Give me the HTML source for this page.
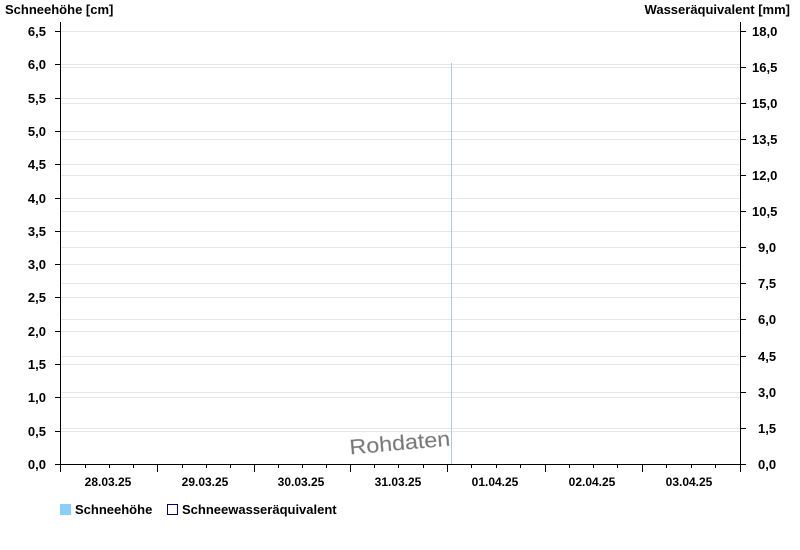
<!DOCTYPE html>
<html><head><meta charset="utf-8"><style>
html,body{margin:0;padding:0;background:#fff}
svg{display:block;font-family:"Liberation Sans",Arial,sans-serif;font-weight:bold}
</style></head><body>
<svg width="800" height="550" xmlns="http://www.w3.org/2000/svg">
<g stroke="#e6e6e6" stroke-width="1">
<line x1="61" x2="740" y1="31.5" y2="31.5"/><line x1="61" x2="740" y1="64.5" y2="64.5"/><line x1="61" x2="740" y1="98.5" y2="98.5"/><line x1="61" x2="740" y1="131.5" y2="131.5"/><line x1="61" x2="740" y1="164.5" y2="164.5"/><line x1="61" x2="740" y1="198.5" y2="198.5"/><line x1="61" x2="740" y1="231.5" y2="231.5"/><line x1="61" x2="740" y1="264.5" y2="264.5"/><line x1="61" x2="740" y1="297.5" y2="297.5"/><line x1="61" x2="740" y1="331.5" y2="331.5"/><line x1="61" x2="740" y1="364.5" y2="364.5"/><line x1="61" x2="740" y1="397.5" y2="397.5"/><line x1="61" x2="740" y1="431.5" y2="431.5"/>
<line x1="61" x2="740" y1="67.5" y2="67.5"/><line x1="61" x2="740" y1="103.5" y2="103.5"/><line x1="61" x2="740" y1="139.5" y2="139.5"/><line x1="61" x2="740" y1="175.5" y2="175.5"/><line x1="61" x2="740" y1="211.5" y2="211.5"/><line x1="61" x2="740" y1="247.5" y2="247.5"/><line x1="61" x2="740" y1="283.5" y2="283.5"/><line x1="61" x2="740" y1="319.5" y2="319.5"/><line x1="61" x2="740" y1="356.5" y2="356.5"/><line x1="61" x2="740" y1="392.5" y2="392.5"/><line x1="61" x2="740" y1="428.5" y2="428.5"/>
</g>
<line x1="451.5" x2="451.5" y1="63" y2="464" stroke="#9fcff0"/>
<text x="349" y="450" transform="rotate(-5 400 440)" font-size="21" font-weight="normal" fill="#777" stroke="#aaa" stroke-width="0.3" textLength="101" lengthAdjust="spacingAndGlyphs">Rohdaten</text>
<g stroke="#000" stroke-width="1">
<line x1="60.5" x2="60.5" y1="22" y2="464"/>
<line x1="740.5" x2="740.5" y1="22" y2="464"/>
<line x1="55" x2="741" y1="464.5" y2="464.5"/>
<path d="M55 31.5h6M55 64.5h6M55 98.5h6M55 131.5h6M55 164.5h6M55 198.5h6M55 231.5h6M55 264.5h6M55 297.5h6M55 331.5h6M55 364.5h6M55 397.5h6M55 431.5h6"/>
<path d="M740 31.5h6M740 67.5h6M740 103.5h6M740 139.5h6M740 175.5h6M740 211.5h6M740 247.5h6M740 283.5h6M740 319.5h6M740 356.5h6M740 392.5h6M740 428.5h6M740 464.5h6"/>
<path d="M60.5 464v8M157.5 464v8M254.5 464v8M350.5 464v8M447.5 464v8M545.5 464v8M642.5 464v8M740.5 464v8"/>
<path d="M85.5 464v4M109.5 464v4M133.5 464v4M182.5 464v4M206.5 464v4M230.5 464v4M278.5 464v4M302.5 464v4M326.5 464v4M374.5 464v4M398.5 464v4M423.5 464v4M471.5 464v4M496.5 464v4M520.5 464v4M569.5 464v4M593.5 464v4M617.5 464v4M666.5 464v4M691.5 464v4M715.5 464v4"/>
</g>
<g font-size="13" fill="#000">
<text x="5" y="14">Schneehöhe [cm]</text>
<text x="790" y="14" text-anchor="end">Wasseräquivalent [mm]</text>
</g>
<g font-size="13" fill="#000" text-anchor="end">
<text x="46" y="36">6,5</text><text x="46" y="69">6,0</text><text x="46" y="103">5,5</text><text x="46" y="136">5,0</text><text x="46" y="169">4,5</text><text x="46" y="203">4,0</text><text x="46" y="236">3,5</text><text x="46" y="269">3,0</text><text x="46" y="302">2,5</text><text x="46" y="336">2,0</text><text x="46" y="369">1,5</text><text x="46" y="402">1,0</text><text x="46" y="436">0,5</text><text x="46" y="469">0,0</text>
</g>
<g font-size="13" fill="#000">
<text x="752" y="36">18,0</text><text x="752" y="72">16,5</text><text x="752" y="108">15,0</text><text x="752" y="144">13,5</text><text x="752" y="180">12,0</text><text x="752" y="216">10,5</text><text x="758" y="252">9,0</text><text x="758" y="288">7,5</text><text x="758" y="324">6,0</text><text x="758" y="361">4,5</text><text x="758" y="397">3,0</text><text x="758" y="433">1,5</text><text x="758" y="469">0,0</text>
</g>
<g font-size="12" fill="#000" text-anchor="middle">
<text x="108" y="486">28.03.25</text><text x="205" y="486">29.03.25</text><text x="301" y="486">30.03.25</text><text x="398" y="486">31.03.25</text><text x="495" y="486">01.04.25</text><text x="592" y="486">02.04.25</text><text x="689" y="486">03.04.25</text>
</g>
<rect x="60" y="504" width="11" height="11" fill="#87cefa"/>
<rect x="167.5" y="504.5" width="10" height="10" fill="#fff" stroke="#000080"/>
<g font-size="13" fill="#000">
<text x="75" y="514">Schneehöhe</text>
<text x="182" y="514">Schneewasseräquivalent</text>
</g>
</svg>
</body></html>
